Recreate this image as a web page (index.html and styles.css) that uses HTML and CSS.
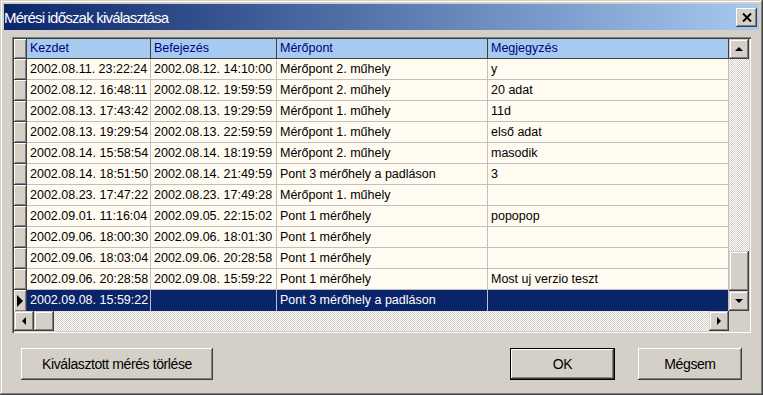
FILE: index.html
```html
<!DOCTYPE html>
<html lang="hu">
<head>
    <meta charset="UTF-8">
    <title>Mérési időszak kiválasztása</title>
    <link rel="stylesheet" href="styles.css">
</head>
<body>
    <div class="window">
        <div class="titlebar">
            <span class="title">Mérési időszak kiválasztása</span>
            <div class="close">
                <svg width="10" height="9" viewBox="0 0 10 9"><path d="M1 0.5 L9 8.5 M9 0.5 L1 8.5" stroke="#000" stroke-width="2"/></svg>
            </div>
        </div>

        <div class="content">
            <div class="grid">
                <div class="grid-top">
                    <div class="table">
                        <div class="row head">
                            <div class="ind"></div>
                            <div class="cell">Kezdet</div>
                            <div class="cell">Befejezés</div>
                            <div class="cell">Mérőpont</div>
                            <div class="cell">Megjegyzés</div>
                        </div>
                        <div class="row">
                            <div class="ind"></div>
                            <div class="cell">2002.08.11. 23:22:24</div>
                            <div class="cell">2002.08.12. 14:10:00</div>
                            <div class="cell">Mérőpont 2. műhely</div>
                            <div class="cell">y</div>
                        </div>
                        <div class="row">
                            <div class="ind"></div>
                            <div class="cell">2002.08.12. 16:48:11</div>
                            <div class="cell">2002.08.12. 19:59:59</div>
                            <div class="cell">Mérőpont 2. műhely</div>
                            <div class="cell">20 adat</div>
                        </div>
                        <div class="row">
                            <div class="ind"></div>
                            <div class="cell">2002.08.13. 17:43:42</div>
                            <div class="cell">2002.08.13. 19:29:59</div>
                            <div class="cell">Mérőpont 1. műhely</div>
                            <div class="cell">11d</div>
                        </div>
                        <div class="row">
                            <div class="ind"></div>
                            <div class="cell">2002.08.13. 19:29:54</div>
                            <div class="cell">2002.08.13. 22:59:59</div>
                            <div class="cell">Mérőpont 1. műhely</div>
                            <div class="cell">első adat</div>
                        </div>
                        <div class="row">
                            <div class="ind"></div>
                            <div class="cell">2002.08.14. 15:58:54</div>
                            <div class="cell">2002.08.14. 18:19:59</div>
                            <div class="cell">Mérőpont 2. műhely</div>
                            <div class="cell">masodik</div>
                        </div>
                        <div class="row">
                            <div class="ind"></div>
                            <div class="cell">2002.08.14. 18:51:50</div>
                            <div class="cell">2002.08.14. 21:49:59</div>
                            <div class="cell">Pont 3 mérőhely a padláson</div>
                            <div class="cell">3</div>
                        </div>
                        <div class="row">
                            <div class="ind"></div>
                            <div class="cell">2002.08.23. 17:47:22</div>
                            <div class="cell">2002.08.23. 17:49:28</div>
                            <div class="cell">Mérőpont 1. műhely</div>
                            <div class="cell"></div>
                        </div>
                        <div class="row">
                            <div class="ind"></div>
                            <div class="cell">2002.09.01. 11:16:04</div>
                            <div class="cell">2002.09.05. 22:15:02</div>
                            <div class="cell">Pont 1 mérőhely</div>
                            <div class="cell">popopop</div>
                        </div>
                        <div class="row">
                            <div class="ind"></div>
                            <div class="cell">2002.09.06. 18:00:30</div>
                            <div class="cell">2002.09.06. 18:01:30</div>
                            <div class="cell">Pont 1 mérőhely</div>
                            <div class="cell"></div>
                        </div>
                        <div class="row">
                            <div class="ind"></div>
                            <div class="cell">2002.09.06. 18:03:04</div>
                            <div class="cell">2002.09.06. 20:28:58</div>
                            <div class="cell">Pont 1 mérőhely</div>
                            <div class="cell"></div>
                        </div>
                        <div class="row">
                            <div class="ind"></div>
                            <div class="cell">2002.09.06. 20:28:58</div>
                            <div class="cell">2002.09.08. 15:59:22</div>
                            <div class="cell">Pont 1 mérőhely</div>
                            <div class="cell">Most uj verzio teszt</div>
                        </div>
                        <div class="row selected">
                            <div class="ind"><span class="arrow right"></span></div>
                            <div class="cell">2002.09.08. 15:59:22</div>
                            <div class="cell"></div>
                            <div class="cell">Pont 3 mérőhely a padláson</div>
                            <div class="cell"></div>
                        </div>
                    </div>

                    <div class="vscroll">
                        <div class="sbtn"><span class="arrow up"></span></div>
                        <div class="track"></div>
                        <div class="thumb-v"></div>
                        <div class="sbtn"><span class="arrow down"></span></div>
                    </div>
                </div>

                <div class="hscroll">
                    <div class="sbtn"><span class="arrow left"></span></div>
                    <div class="thumb-h"></div>
                    <div class="track"></div>
                    <div class="sbtn"><span class="arrow right"></span></div>
                    <div class="corner"></div>
                </div>
            </div>

            <div class="buttons">
                <div class="btn wide">Kiválasztott mérés törlése</div>
                <div class="btn-pair">
                    <div class="btn default">OK</div>
                    <div class="btn">Mégsem</div>
                </div>
            </div>
        </div>
    </div>
</body>
</html>
```

FILE: styles.css
```css
* {
    box-sizing: border-box;
}

body {
    margin: 0;
    background: #d4d0c8;
    font-family: 'Liberation Sans', Arial, sans-serif;
}

.window {
    width: 763px;
    height: 395px;
    padding: 4px;
    background: #d4d0c8;
    box-shadow: inset -1px -1px #404040, inset 1px 1px #d4d0c8,
                inset -2px -2px #808080, inset 2px 2px #fff;
}

.titlebar {
    height: 26px;
    display: flex;
    align-items: center;
    justify-content: space-between;
    padding: 0 2px 0 0;
    background: linear-gradient(to right, #0a246a, #a6caf0);
}

.title {
    color: #fff;
    font-size: 15px;
    letter-spacing: -0.8px;
}

.close {
    width: 21px;
    height: 19px;
    display: flex;
    align-items: center;
    justify-content: center;
    background: #d4d0c8;
    box-shadow: inset -1px -1px #404040, inset 1px 1px #fff,
                inset -2px -2px #808080;
}

.content {
    padding: 7px 8px 0 8px;
}

/* rács */
.grid {
    width: 739px;
    padding: 2px;
    background: #d4d0c8;
    box-shadow: inset 1px 1px #808080, inset 2px 2px #404040,
                inset -1px -1px #fff, inset -2px -2px #d4d0c8;
}

.grid-top {
    display: flex;
}

.table {
    width: 715px;
    background: #fffbf0;
    font-size: 12.5px;
}

.row {
    display: grid;
    grid-template-columns: 13px 124px 126px 211px 241px;
    height: 21px;
}

.row .cell {
    border-right: 1px solid #c0c0c0;
    border-bottom: 1px solid #c0c0c0;
    padding-left: 3px;
    line-height: 20px;
    white-space: nowrap;
    overflow: hidden;
    color: #000;
}

.row.head {
    height: 20px;
}

.row.head .cell {
    background: #a6caf0;
    color: #000080;
    border-right: 1px solid #404040;
    border-bottom: 1px solid #404040;
    line-height: 19px;
}

.row.selected .cell {
    background: #0a246a;
    color: #fff;
    border-bottom: none;
}

.ind {
    background: #d4d0c8;
    border-right: 1px solid #404040;
    border-bottom: 1px solid #404040;
    box-shadow: inset 1px 1px #fff, inset -1px -1px #808080;
    display: flex;
    align-items: center;
    justify-content: center;
}

.row.selected .ind {
    border-bottom: none;
}

/* görgetősávok */
.vscroll {
    width: 20px;
    display: flex;
    flex-direction: column;
}

.track {
    flex: 1;
    background-color: #fff;
    background-image: conic-gradient(#d4d0c8 25%, #fff 0 50%, #d4d0c8 0 75%, #fff 0);
    background-size: 2px 2px;
}

.sbtn, .thumb-v, .thumb-h, .corner {
    width: 20px;
    height: 20px;
    background: #d4d0c8;
    display: flex;
    align-items: center;
    justify-content: center;
}

.sbtn, .thumb-v, .thumb-h {
    box-shadow: inset -1px -1px #404040, inset 1px 1px #d4d0c8,
                inset -2px -2px #808080, inset 2px 2px #fff;
}

.thumb-v {
    height: 40px;
}

.hscroll {
    display: flex;
    height: 20px;
}

.arrow {
    width: 0;
    height: 0;
    border-style: solid;
    border-color: transparent;
}

.arrow.up {
    border-width: 0 4px 4px 4px;
    border-bottom-color: #000;
}

.arrow.down {
    border-width: 4px 4px 0 4px;
    border-top-color: #000;
}

.arrow.left {
    border-width: 4px 4px 4px 0;
    border-right-color: #000;
}

.arrow.right {
    border-width: 4px 0 4px 4px;
    border-left-color: #000;
}

.ind .arrow.right {
    border-width: 6px 0 6px 6px;
}

/* gombok */
.buttons {
    display: flex;
    justify-content: space-between;
    margin-top: 15px;
    padding: 0 9px 0 9px;
}

.btn-pair {
    display: flex;
    gap: 23px;
}

.btn {
    width: 104px;
    height: 32px;
    background: #d4d0c8;
    display: flex;
    align-items: center;
    justify-content: center;
    font-size: 14px;
    color: #000;
    letter-spacing: -0.4px;
    box-shadow: inset -1px -1px #404040, inset 1px 1px #fff,
                inset -2px -2px #808080;
}

.btn.wide {
    width: 192px;
}

.btn.default {
    width: 105px;
    border: 1px solid #000;
    box-shadow: inset -1px -1px #404040, inset 1px 1px #fff,
                inset -2px -2px #808080;
}
```
